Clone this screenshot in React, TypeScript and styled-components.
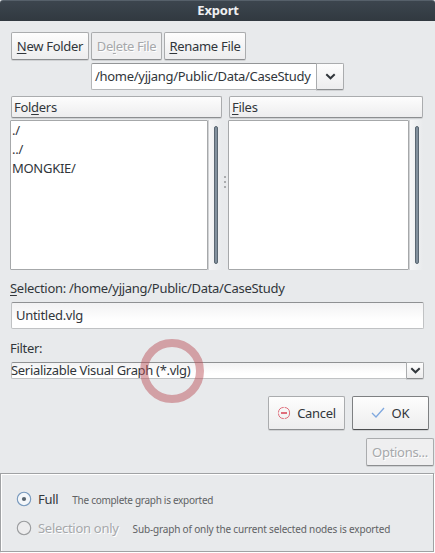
import React from 'react';
import styled, { createGlobalStyle, css } from 'styled-components';

const GlobalStyle = createGlobalStyle`
  * { box-sizing: border-box; }
  html, body { margin: 0; padding: 0; background: #e8eaec; overflow: hidden; }
  body { font-family: "Noto Sans", "Open Sans", sans-serif; font-size: 13px; color: #31363b; }
  button, input { font: inherit; color: inherit; }
`;

const Dialog = styled.main`
  position: relative;
  width: 435px;
  height: 553px;
  display: flex;
  flex-direction: column;
  background: #e8eaec;
  overflow: hidden;
`;

const TitleBar = styled.header`
  height: 21px;
  flex: none;
  border-top: 1px solid #56606a;
  border-radius: 3px 3px 0 0;
  background: linear-gradient(#3c454e, #313940);
  color: #eff0f1;
  font-weight: 700;
  line-height: 18px;
  text-align: center;
  padding-left: 1px;
`;

const Text = styled.span<{ $spacing?: number; $size?: number }>`
  white-space: pre;
  letter-spacing: ${p => p.$spacing ?? -0.29}px;
  font-size: ${p => p.$size ?? 13}px;
`;

const Mnemonic = styled.span`
  text-decoration: underline;
  text-decoration-thickness: 1px;
  text-underline-offset: 2px;
  text-decoration-skip-ink: none;
`;

const raised = css`
  border: 1px solid #aaacae;
  border-bottom-color: #8c8e90;
  border-radius: 2px;
  background: linear-gradient(#fdfdfd, #ededee);
  box-shadow: 0 1px 0 #cfd1d3;
`;

const Button = styled.button<{ $w: number; $h: number; $strong?: boolean }>`
  ${raised}
  display: flex;
  align-items: center;
  justify-content: center;
  flex: none;
  padding: 0;
  width: ${p => p.$w}px;
  height: ${p => p.$h}px;
  ${p => p.$strong && css`border-color: #7e8082; border-bottom-color: #4c4e50;`}
  &:disabled {
    color: #a6a8ab;
    background: #efeff0;
    text-shadow: 1px 1px 0 #fff;
  }
`;

const Toolbar = styled.div`
  display: flex;
  gap: 2px;
  padding: 11px 0 0 11px;
`;

const PathCombo = styled.div`
  display: flex;
  width: 253px;
  height: 27px;
  margin: 3px 0 0 91px;
`;

const PathValue = styled.div`
  flex: 1;
  min-width: 0;
  display: flex;
  align-items: center;
  padding: 0 0 1px 3px;
  border: 1px solid #b4b6b8;
  border-top-color: #939597;
  border-right: 0;
  border-radius: 2px 0 0 2px;
  background: #fff;
`;

const DropButton = styled.button<{ $w: number }>`
  ${raised}
  width: ${p => p.$w}px;
  flex: none;
  padding: 0;
  display: flex;
  align-items: center;
  justify-content: center;
  border-radius: 0 2px 2px 0;
`;

const Browser = styled.section`
  display: flex;
  margin: 6px 0 0 10px;
  height: 174px;
`;

const Pane = styled.div<{ $w: number }>`
  width: ${p => p.$w}px;
  display: flex;
  flex-direction: column;
  gap: 2px;
`;

const PaneHeader = styled.div`
  ${raised}
  height: 22px;
  margin-left: 1px;
  padding-left: 2px;
  display: flex;
  align-items: center;
`;

const ListArea = styled.div`
  display: flex;
  flex: 1;
`;

const List = styled.ul`
  flex: 1;
  margin: 0;
  padding: 0 1px;
  list-style: none;
  background: #fff;
  border: 1px solid #a6a8aa;
  border-radius: 1px;
`;

const ListItem = styled.li`
  height: 19px;
  line-height: 18px;
`;

const ScrollTrack = styled.div`
  width: 14px;
  padding: 6px 4px 6px 6px;
  background: linear-gradient(90deg, #d0d2d4 0 1px, #f7f7f8 1px, #e8eaec);
`;

const ScrollThumb = styled.div`
  width: 4px;
  height: 138px;
  border: 1px solid #5b6772;
  border-radius: 2px;
  background: #82909d;
`;

const Splitter = styled.div`
  width: 6px;
  display: flex;
  flex-direction: column;
  align-items: center;
  gap: 3px;
  padding-top: 80px;
`;

const Dot = styled.i`
  width: 2px;
  height: 2px;
  background: #aaacae;
`;

const Caption = styled.div<{ $top: number }>`
  height: 18px;
  line-height: 18px;
  margin: ${p => p.$top}px 0 0 10px;
`;

const field = css`
  border: 1px solid #c0c2c4;
  border-top-color: #8f9193;
  border-radius: 2px;
  background: linear-gradient(#f2f2f3, #fff 70%);
`;

const NameField = styled.input`
  ${field}
  width: 413px;
  height: 27px;
  margin: 5px 0 0 11px;
  padding: 0 4px 1px;
  letter-spacing: -0.29px;
  outline: 0;
`;

const FilterCombo = styled.div`
  display: flex;
  width: 413px;
  height: 17px;
  margin: 5px 0 0 11px;
`;

const FilterValue = styled.div`
  ${field}
  flex: 1;
  border-right: 0;
  border-radius: 2px 0 0 2px;
  line-height: 15px;
  text-indent: -1px;
`;

const Actions = styled.div<{ $top: number; $right: number }>`
  display: flex;
  justify-content: flex-end;
  gap: 7px;
  margin-top: ${p => p.$top}px;
  padding-right: ${p => p.$right}px;
`;

const IconSlot = styled.svg<{ $gap: number }>`
  flex: none;
  margin-right: ${p => p.$gap}px;
`;

const ScopePanel = styled.fieldset`
  height: 79px;
  width: 434px;
  margin: 7px 0 0;
  padding: 10px 0 0 15px;
  border: 1px solid #a0a2a4;
  box-shadow: inset 1px 1px 0 #fff, 1px 1px 0 #fff;
`;

const ScopeRow = styled.label<{ $disabled?: boolean }>`
  display: flex;
  align-items: center;
  height: 29px;
  color: ${p => (p.$disabled ? '#a6a8ab' : '#31363b')};
  text-shadow: ${p => (p.$disabled ? '1px 1px 0 #fff' : 'none')};
`;

const Hint = styled(Text)<{ $left: number }>`
  margin-left: ${p => p.$left}px;
  padding-top: 2px;
  color: #606264;
  text-shadow: none;
`;

const ClickRing = styled.div`
  position: absolute;
  left: 140px;
  top: 339px;
  width: 64px;
  height: 64px;
  border: 8px solid rgba(184, 76, 86, 0.47);
  border-radius: 50%;
  pointer-events: none;
`;

const Chevron = () => (
  <svg width="11" height="8" viewBox="0 0 11 8" fill="none" stroke="#31363b" strokeWidth="2">
    <path d="M1.3 1.3 5.5 5.3 9.7 1.3" />
  </svg>
);

const Radio = ({ checked }: { checked?: boolean }) => (
  <IconSlot $gap={6} width="16" height="16" viewBox="0 0 16 16">
    <circle cx="8" cy="8" r="6.7" fill={checked ? '#f4f7fa' : '#ededee'} stroke={checked ? '#7799bd' : '#9a9c9e'} strokeWidth="1.1" />
    {checked && <circle cx="8" cy="8" r="2.1" fill="#59656f" />}
  </IconSlot>
);

const Scroll = () => (
  <ScrollTrack>
    <ScrollThumb />
  </ScrollTrack>
);

export default function App() {
  return (
    <>
      <GlobalStyle />
      <Dialog>
        <TitleBar><Text $spacing={-0.2}>Export</Text></TitleBar>
        <Toolbar>
          <Button $w={78} $h={28}><Text><Mnemonic>N</Mnemonic>ew Folder</Text></Button>
          <Button $w={71} $h={28} disabled><Text $spacing={-0.4}>De<Mnemonic>l</Mnemonic>ete File</Text></Button>
          <Button $w={82} $h={28}><Text $spacing={-0.29}><Mnemonic>R</Mnemonic>ename File</Text></Button>
        </Toolbar>
        <PathCombo>
          <PathValue><Text>/home/yjjang/Public/Data/CaseStudy</Text></PathValue>
          <DropButton $w={28} aria-label="Choose folder"><Chevron /></DropButton>
        </PathCombo>
        <Browser>
          <Pane $w={212}>
            <PaneHeader><Text>Fol<Mnemonic>d</Mnemonic>ers</Text></PaneHeader>
            <ListArea>
              <List>
                <ListItem><Text>./</Text></ListItem>
                <ListItem><Text>../</Text></ListItem>
                <ListItem><Text>MONGKIE/</Text></ListItem>
              </List>
              <Scroll />
            </ListArea>
          </Pane>
          <Splitter><Dot /><Dot /><Dot /></Splitter>
          <Pane $w={195}>
            <PaneHeader><Text><Mnemonic>F</Mnemonic>iles</Text></PaneHeader>
            <ListArea>
              <List />
              <Scroll />
            </ListArea>
          </Pane>
        </Browser>
        <Caption $top={9}><Text><Mnemonic>S</Mnemonic>election: /home/yjjang/Public/Data/CaseStudy</Text></Caption>
        <NameField defaultValue="Untitled.vlg" />
        <Caption $top={10}><Text>Filter:</Text></Caption>
        <FilterCombo>
          <FilterValue><Text $spacing={-0.32}>Serializable Visual Graph (*.vlg)</Text></FilterValue>
          <DropButton $w={18} aria-label="Choose filter"><Chevron /></DropButton>
        </FilterCombo>
        <Actions $top={17} $right={6}>
          <Button $w={77} $h={34}>
            <IconSlot $gap={6} width="14" height="14" viewBox="0 0 14 14" fill="none" stroke="#df6d7b">
              <circle cx="7" cy="7" r="5.6" strokeDasharray="7.8 1" />
              <path d="M4 7h6" strokeWidth="2" />
            </IconSlot>
            <Text>Cancel</Text>
          </Button>
          <Button $w={77} $h={34} $strong>
            <IconSlot $gap={6} width="14" height="12" viewBox="0 0 14 12" fill="none" stroke="#7fa8df" strokeWidth="1.3">
              <path d="M1 6 5 10 13 1" />
            </IconSlot>
            <Text $spacing={0}>OK</Text>
          </Button>
        </Actions>
        <Actions $top={8} $right={1}>
          <Button $w={68} $h={28} disabled><Text>Options...</Text></Button>
        </Actions>
        <ScopePanel>
          <ScopeRow>
            <Radio checked />
            <Text>Full</Text>
            <Hint $left={14} $size={10}>The complete graph is exported</Hint>
          </ScopeRow>
          <ScopeRow $disabled>
            <Radio />
            <Text>Selection only</Text>
            <Hint $left={14} $size={10} $spacing={-0.16}>Sub-graph of only the current selected nodes is exported</Hint>
          </ScopeRow>
        </ScopePanel>
        <ClickRing />
      </Dialog>
    </>
  );
}
